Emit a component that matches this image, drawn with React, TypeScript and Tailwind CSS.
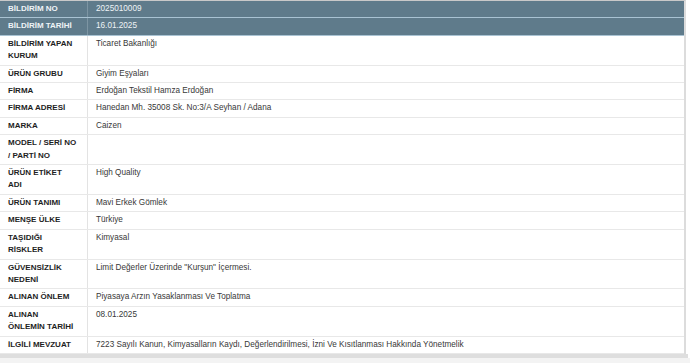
const rows: { label: string[]; value: string; head?: boolean }[] = [
  { label: ["BİLDİRİM NO"], value: "2025010009", head: true },
  { label: ["BİLDİRİM TARİHİ"], value: "16.01.2025", head: true },
  { label: ["BİLDİRİM YAPAN", "KURUM"], value: "Ticaret Bakanlığı" },
  { label: ["ÜRÜN GRUBU"], value: "Giyim Eşyaları" },
  { label: ["FİRMA"], value: "Erdoğan Tekstil Hamza Erdoğan" },
  { label: ["FİRMA ADRESİ"], value: "Hanedan Mh. 35008 Sk. No:3/A Seyhan / Adana" },
  { label: ["MARKA"], value: "Caizen" },
  { label: ["MODEL / SERİ NO", "/ PARTİ NO"], value: "" },
  { label: ["ÜRÜN ETİKET", "ADI"], value: "High Quality" },
  { label: ["ÜRÜN TANIMI"], value: "Mavi Erkek Gömlek" },
  { label: ["MENŞE ÜLKE"], value: "Türkiye" },
  { label: ["TAŞIDIĞI", "RİSKLER"], value: "Kimyasal" },
  { label: ["GÜVENSİZLİK", "NEDENİ"], value: "Limit Değerler Üzerinde \"Kurşun\" İçermesi." },
  { label: ["ALINAN ÖNLEM"], value: "Piyasaya Arzın Yasaklanması Ve Toplatma" },
  { label: ["ALINAN", "ÖNLEMİN TARİHİ"], value: "08.01.2025" },
  {
    label: ["İLGİLİ MEVZUAT"],
    value:
      "7223 Sayılı Kanun, Kimyasalların Kaydı, Değerlendirilmesi, İzni Ve Kısıtlanması Hakkında Yönetmelik",
  },
]

export default function App() {
  return (
    <div className="w-[690px] h-[363px] bg-white font-['Liberation_Sans',Arial,sans-serif] overflow-hidden">
      <div className="w-[686px] border-t border-[#c9c9c9] border-r-2 border-r-[#dcdcdc]">
        {rows.map((row, i) => (
          <div
            key={i}
            className={
              row.head
                ? "flex bg-[#5f7b8b] text-[#eef3f6] border-b border-[#a9c3d3]"
                : "flex bg-white border-b border-[#e8e8e8]"
            }
          >
            <div
              className={
                row.head
                  ? "w-[88px] shrink-0 pl-2 py-[2px] text-[8px] font-bold leading-[12.4px] border-r border-[#7d95a3]"
                  : "w-[88px] shrink-0 pl-2 py-[2px] text-[8px] font-bold leading-[12.4px] text-[#1e1e1e] border-r border-[#e3e3e3]"
              }
            >
              {row.label.map((l, j) => (
                <div key={j}>{l}</div>
              ))}
            </div>
            <div
              className={
                row.head
                  ? "flex-1 pl-2 py-[2px] text-[8.2px] leading-[12.4px]"
                  : "flex-1 pl-2 py-[2px] text-[8.2px] leading-[12.4px] text-[#383838]"
              }
            >
              {row.value}
            </div>
          </div>
        ))}
      </div>
      <div className="w-[688px] h-[4px] bg-[#dedede]" />
      <div className="h-full bg-[#f3f3f3]" />
    </div>
  )
}
